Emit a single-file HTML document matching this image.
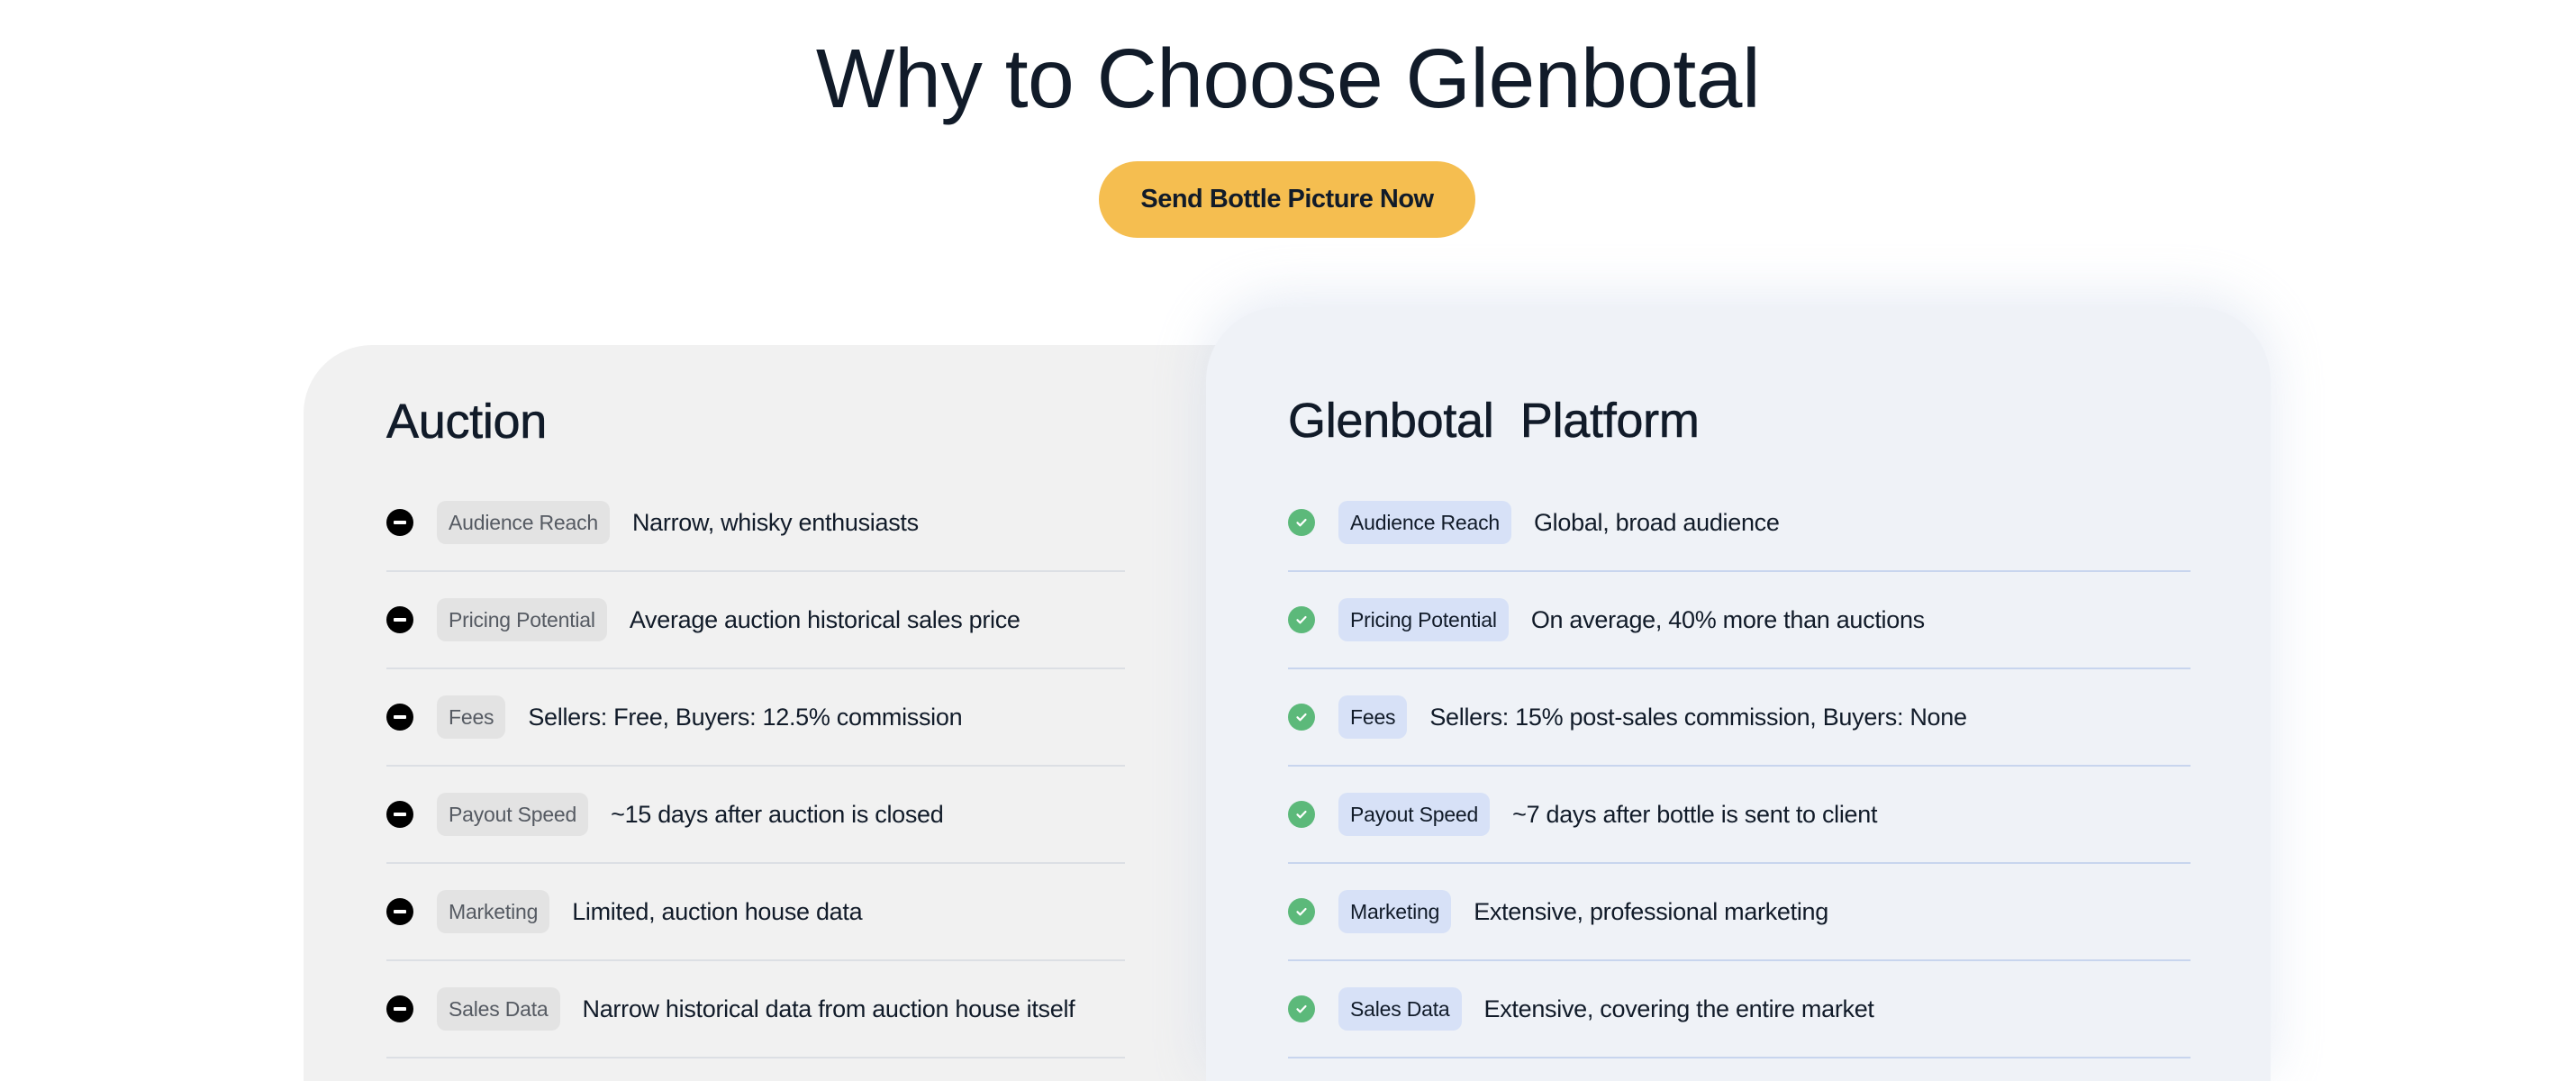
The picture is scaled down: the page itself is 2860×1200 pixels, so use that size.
<!DOCTYPE html>
<html style="height:1200px;overflow:hidden"><head><meta charset="utf-8"><style>
*{margin:0;padding:0;box-sizing:border-box}
body{width:2860px;height:1200px;overflow:hidden;background:#fff;font-family:"Liberation Sans",sans-serif;color:#111b29;position:relative}
h1{position:absolute;left:0;width:2860px;top:32px;text-align:center;font-size:93px;font-weight:400;letter-spacing:-0.5px;color:#111b29;line-height:110px}
.btn{position:absolute;left:1220px;top:179px;width:418px;height:85px;border-radius:43px;background:#f5be50;font-size:29px;font-weight:700;text-align:center;line-height:85px;letter-spacing:-0.5px}
.card{position:absolute;overflow:hidden}
.left{left:337px;top:383px;width:1040px;height:817px;background:#f1f1f1;border-radius:76px 0 0 0}
.right{left:1339px;top:341px;width:1182px;height:859px;background:#eff2f7;border-radius:82px 82px 0 0;box-shadow:0 -10px 60px rgba(200,210,230,.45)}
.card h2{position:absolute;font-size:54px;font-weight:400;letter-spacing:-0.3px;line-height:60px;-webkit-text-stroke:0.6px #111b29}
.row{position:absolute;height:108px;display:flex;align-items:center}
.ic{width:30px;height:30px;border-radius:50%;flex:none;display:flex;align-items:center;justify-content:center}
.tag{margin-left:26px;height:48px;line-height:48px;padding:0 13px;border-radius:10px;font-size:23px;flex:none;letter-spacing:-0.2px}
.val{margin-left:25px;font-size:27px;letter-spacing:-0.3px;white-space:nowrap}
.left .ic{background:#000}
.left .ic::after{content:"";width:14px;height:4px;background:#fff;border-radius:1px}
.left .tag{background:#e3e3e3;color:#555a62}
.left .div{position:absolute;left:92px;width:820px;height:2px;background:#dcdfe4}
.right .ic{background:#5cb97a}
.right .tag{background:#d7e1f7;color:#111b29}
.right .div{position:absolute;left:91px;width:1002px;height:2px;background:#c8d5ee}
</style></head><body>
<h1>Why to Choose Glenbotal</h1>
<div class="btn">Send Bottle Picture Now</div>

<div class="card left">
<h2 style="left:92px;top:55px">Auction</h2>
<div class="row" style="left:92px;top:143px"><div class="ic"></div><div class="tag">Audience Reach</div><div class="val">Narrow, whisky enthusiasts</div></div>
<div class="div" style="top:250px"></div>
<div class="row" style="left:92px;top:251px"><div class="ic"></div><div class="tag">Pricing Potential</div><div class="val">Average auction historical sales price</div></div>
<div class="div" style="top:358px"></div>
<div class="row" style="left:92px;top:359px"><div class="ic"></div><div class="tag">Fees</div><div class="val">Sellers: Free, Buyers: 12.5% commission</div></div>
<div class="div" style="top:466px"></div>
<div class="row" style="left:92px;top:467px"><div class="ic"></div><div class="tag">Payout Speed</div><div class="val">~15 days after auction is closed</div></div>
<div class="div" style="top:574px"></div>
<div class="row" style="left:92px;top:575px"><div class="ic"></div><div class="tag">Marketing</div><div class="val">Limited, auction house data</div></div>
<div class="div" style="top:682px"></div>
<div class="row" style="left:92px;top:683px"><div class="ic"></div><div class="tag">Sales Data</div><div class="val">Narrow historical data from auction house itself</div></div>
<div class="div" style="top:790px"></div>
</div>

<div class="card right">
<h2 style="left:91px;top:96px">Glenbotal&nbsp; Platform</h2>
<div class="row" style="left:91px;top:185px"><div class="ic"><svg width="16" height="16" viewBox="0 0 16 16"><path d="M3.5 8.3l3 3 6-6.3" fill="none" stroke="#fff" stroke-width="2.2" stroke-linecap="round" stroke-linejoin="round"/></svg></div><div class="tag">Audience Reach</div><div class="val">Global, broad audience</div></div>
<div class="div" style="top:292px"></div>
<div class="row" style="left:91px;top:293px"><div class="ic"><svg width="16" height="16" viewBox="0 0 16 16"><path d="M3.5 8.3l3 3 6-6.3" fill="none" stroke="#fff" stroke-width="2.2" stroke-linecap="round" stroke-linejoin="round"/></svg></div><div class="tag">Pricing Potential</div><div class="val">On average, 40% more than auctions</div></div>
<div class="div" style="top:400px"></div>
<div class="row" style="left:91px;top:401px"><div class="ic"><svg width="16" height="16" viewBox="0 0 16 16"><path d="M3.5 8.3l3 3 6-6.3" fill="none" stroke="#fff" stroke-width="2.2" stroke-linecap="round" stroke-linejoin="round"/></svg></div><div class="tag">Fees</div><div class="val">Sellers: 15% post-sales commission, Buyers: None</div></div>
<div class="div" style="top:508px"></div>
<div class="row" style="left:91px;top:509px"><div class="ic"><svg width="16" height="16" viewBox="0 0 16 16"><path d="M3.5 8.3l3 3 6-6.3" fill="none" stroke="#fff" stroke-width="2.2" stroke-linecap="round" stroke-linejoin="round"/></svg></div><div class="tag">Payout Speed</div><div class="val">~7 days after bottle is sent to client</div></div>
<div class="div" style="top:616px"></div>
<div class="row" style="left:91px;top:617px"><div class="ic"><svg width="16" height="16" viewBox="0 0 16 16"><path d="M3.5 8.3l3 3 6-6.3" fill="none" stroke="#fff" stroke-width="2.2" stroke-linecap="round" stroke-linejoin="round"/></svg></div><div class="tag">Marketing</div><div class="val">Extensive, professional marketing</div></div>
<div class="div" style="top:724px"></div>
<div class="row" style="left:91px;top:725px"><div class="ic"><svg width="16" height="16" viewBox="0 0 16 16"><path d="M3.5 8.3l3 3 6-6.3" fill="none" stroke="#fff" stroke-width="2.2" stroke-linecap="round" stroke-linejoin="round"/></svg></div><div class="tag">Sales Data</div><div class="val">Extensive, covering the entire market</div></div>
<div class="div" style="top:832px"></div>
</div>
</body></html>
